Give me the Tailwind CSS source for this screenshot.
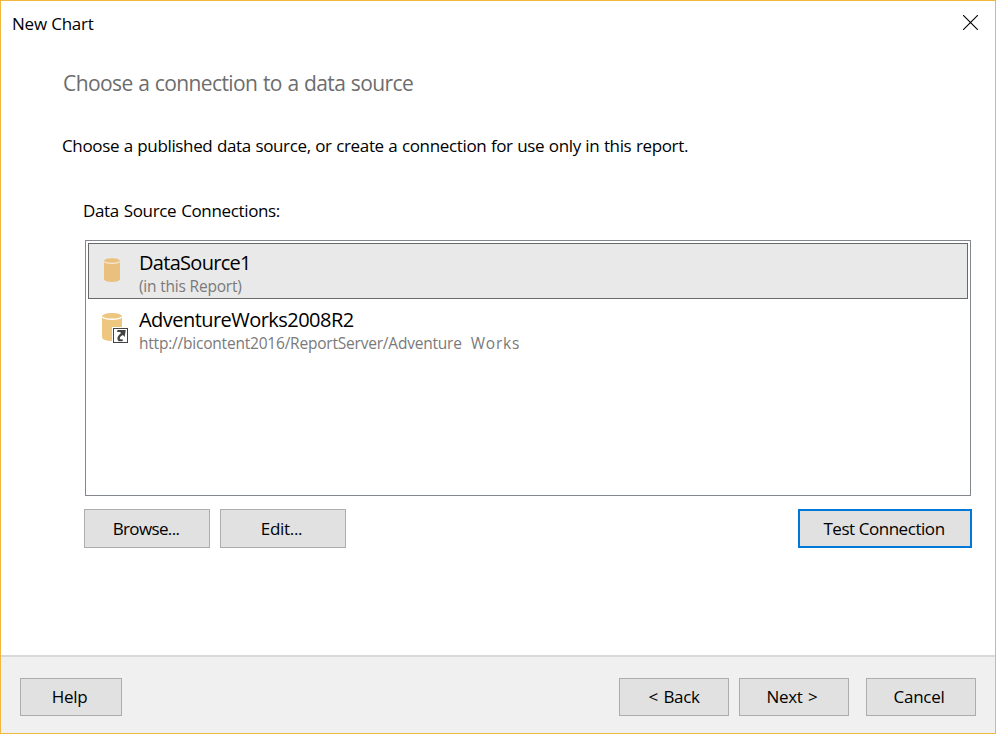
<!DOCTYPE html>
<html lang="en">
<head>
<meta charset="utf-8">
<title>New Chart</title>
<script src="https://cdn.jsdelivr.net/npm/@tailwindcss/browser@4"></script>
</head>
<body class="bg-white">
<div class="w-[996px] h-[734px] flex flex-col border border-[#f0b83c] bg-white text-black text-[17px] font-['Open_Sans','Noto_Sans',sans-serif] whitespace-nowrap overflow-hidden">
  <header class="h-[45px] shrink-0 flex justify-between pl-[11px] pr-[17px]">
    <h1 class="mt-[11px] leading-6 text-[17px] tracking-[-0.2px]">New Chart</h1>
    <button class="mt-[14px] w-[15px] h-[15px]" aria-label="Close">
      <svg width="15" height="15" viewBox="0 0 15 15" stroke="#000" stroke-width="1.1" fill="none"><path d="M0 0l15 15M15 0L0 15"/></svg>
    </button>
  </header>
  <main class="h-[609px] shrink-0 flex flex-col">
    <h2 class="mt-[22px] ml-[62px] leading-[30px] text-[21px] text-[#6d6d6d] tracking-[-0.6px] [word-spacing:0.7px]">Choose a connection to a data source</h2>
    <p class="mt-[35px] ml-[61px] leading-[26px] tracking-[-0.35px] [word-spacing:0.45px]">Choose a published data source, or create a connection for use only in this report.</p>
    <p class="mt-[39px] ml-[82px] leading-[26px] tracking-[-0.35px] [word-spacing:0.8px]">Data Source Connections:</p>
    <ul class="mt-[16px] ml-[84px] w-[886px] h-[256px] border border-[#828790] p-[2px]">
      <li class="h-[56px] flex border border-[#6a6a6a] bg-[#e9e9e9]">
        <svg class="ml-[15px] mt-[13px]" width="17" height="26" viewBox="0 0 17 26"><path d="M0 4.500C0 2 4 1.300 8 1.300S16 2 16 4.500V22c0 2-4 3-8 3S0 24 0 22z" fill="#e9c07e"/><path d="M.3 4.700C2 6.900 14 6.900 15.700 4.700" fill="none" stroke="#f6e8d0" stroke-width="1.200"/></svg>
        <div class="ml-[18px]">
          <div class="mt-[5px] leading-[28px] text-[20px] tracking-[-0.7px]">DataSource1</div>
          <div class="mt-[-1px] leading-[20px] text-[15.5px] text-[#7a7a7a] tracking-[-0.2px]">(in this Report)</div>
        </div>
      </li>
      <li class="h-[56px] flex">
        <svg class="ml-[14px] mt-[13px]" width="28" height="32" viewBox="0 0 28 32"><path d="M0 5C0 2 4.500 1 10 1s10 1 10 4v20c0 2.800-4.500 4-10 4S0 27.800 0 25z" fill="#edc77f"/><path d="M.3 5C3 8 17 8 19.700 5" fill="none" stroke="#fff" stroke-width="1.300"/><path d="M10 15h18v17H10z" fill="#fff"/><rect x="11.500" y="16.500" width="14" height="14" fill="#fff" stroke="#444"/><path d="M15.500 18h8.200l-1 7-1.700-1.900c-3 1.400-3.800 3-2.800 4.200l2.800.2-.5 1.700h-3.800c-2.400-2.800-1.200-5.500 2.200-8l-.6-1.200h-3.200z" fill="#444"/></svg>
        <div class="ml-[9px]">
          <div class="mt-[7px] leading-[28px] text-[20px] tracking-[-0.54px]">AdventureWorks2008R2</div>
          <div class="mt-[-1px] leading-[20px] text-[15.5px] text-[#7a7a7a] flex"><span class="tracking-[-0.21px]">http://bicontent2016/ReportServer/Adventure</span><span class="ml-[9px] tracking-[0.8px]">Works</span></div>
        </div>
      </li>
    </ul>
    <div class="mt-[13px] ml-[83px] mr-[23px] flex h-[39px] leading-[37px]">
      <button class="w-[126px] border border-[#adadad] bg-[#e1e1e1] pr-[2px] tracking-[-0.65px]">Browse...</button>
      <button class="ml-[10px] w-[126px] border border-[#adadad] bg-[#e1e1e1] pr-[3px] tracking-[-0.3px]">Edit...</button>
      <button class="ml-auto w-[174px] border-2 border-[#0078d7] bg-[#e1e1e1] leading-[35px] pr-[2px] tracking-[-0.45px]">Test Connection</button>
    </div>
  </main>
  <footer class="flex-1 border-t-2 border-[#d9d9d9] bg-[#f0f0f0] pt-[21px] pl-[19px] pr-[19px]">
    <div class="flex h-[38px] leading-[36px]">
      <button class="w-[102px] border border-[#adadad] bg-[#e1e1e1] pr-[3px] tracking-[-0.3px]">Help</button>
      <button class="ml-auto w-[110px] border border-[#adadad] bg-[#e1e1e1] tracking-[-0.35px] [word-spacing:1.5px]">&lt; Back</button>
      <button class="ml-[10px] w-[110px] border border-[#adadad] bg-[#e1e1e1] pr-[4px] tracking-[-0.35px] [word-spacing:1.5px]">Next &gt;</button>
      <button class="ml-[17px] w-[110px] border border-[#adadad] bg-[#e1e1e1] pr-[4px] tracking-[-0.3px]">Cancel</button>
    </div>
  </footer>
</div>
</body>
</html>
